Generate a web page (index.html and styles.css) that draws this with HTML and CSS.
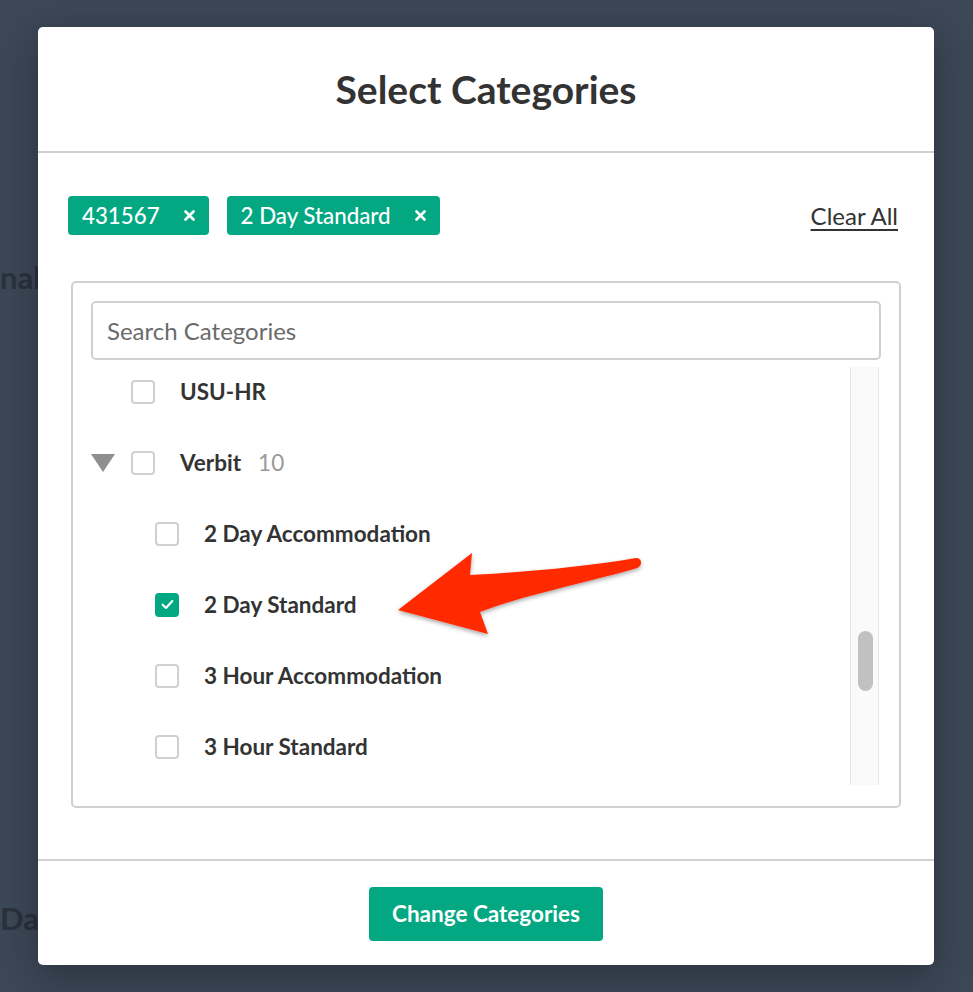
FILE: index.html
```html
<!DOCTYPE html>
<html lang="en">
<head>
  <meta charset="UTF-8">
  <title>Select Categories</title>
  <link rel="stylesheet" href="styles.css">
</head>
<body>

  <div class="page">
    <div class="page-line page-line-top">nal</div>
    <div class="page-line page-line-bottom">Date</div>
  </div>

  <div class="modal">
    <div class="modal-header">
      <h2>Select Categories</h2>
    </div>

    <div class="modal-body">
      <div class="tags-row">
        <div class="tags">
          <span class="tag">431567
            <svg class="tag-x" width="11" height="11" viewBox="0 0 11 11"><path d="M1.5 1.5 L9.5 9.5 M9.5 1.5 L1.5 9.5" stroke="#fff" stroke-width="2.6" stroke-linecap="round"/></svg>
          </span>
          <span class="tag">2 Day Standard
            <svg class="tag-x" width="11" height="11" viewBox="0 0 11 11"><path d="M1.5 1.5 L9.5 9.5 M9.5 1.5 L1.5 9.5" stroke="#fff" stroke-width="2.6" stroke-linecap="round"/></svg>
          </span>
        </div>
        <a class="clear-all" href="#">Clear All</a>
      </div>

      <div class="picker">
        <input class="search" type="text" placeholder="Search Categories">
        <div class="list-wrap">
          <div class="list">
            <div class="row">
              <span class="caret-space"></span>
              <span class="check"></span>
              <span class="label">USU-HR</span>
            </div>
            <div class="row">
              <span class="caret-space"><span class="caret"></span></span>
              <span class="check"></span>
              <span class="label">Verbit</span>
              <span class="count">10</span>
            </div>
            <div class="row child">
              <span class="check"></span>
              <span class="label">2 Day Accommodation</span>
            </div>
            <div class="row child">
              <span class="check checked">
                <svg width="15" height="15" viewBox="0 0 14 14"><path d="M2.5 7.2 L5.6 10.2 L11.5 3.8" fill="none" stroke="#fff" stroke-width="2" stroke-linecap="round" stroke-linejoin="round"/></svg>
              </span>
              <span class="label">2 Day Standard</span>
            </div>
            <div class="row child">
              <span class="check"></span>
              <span class="label">3 Hour Accommodation</span>
            </div>
            <div class="row child">
              <span class="check"></span>
              <span class="label">3 Hour Standard</span>
            </div>
          </div>
          <div class="scrollbar"><div class="thumb"></div></div>
        </div>
      </div>
    </div>

    <div class="modal-footer">
      <button type="button">Change Categories</button>
    </div>
  </div>

  <!-- annotation arrow over the screenshot -->
  <svg class="arrow" width="973" height="992" viewBox="0 0 973 992">
    <defs>
      <filter id="sh" x="-20%" y="-40%" width="140%" height="180%">
        <feDropShadow dx="0" dy="2" stdDeviation="2" flood-color="#000" flood-opacity="0.35"/>
      </filter>
    </defs>
    <path d="M398 610 L472 553 L470 575 C530 572 590 566 636 558 C642 557 643 566 637 568 C590 582 520 596 480 612 L488 634 Z" fill="#ff2a00" filter="url(#sh)"/>
  </svg>

</body>
</html>
```

FILE: styles.css
```css
html, body { margin: 0; height: 100%; }
body { background: #3c4757; font-family: Lato, "Noto Sans", sans-serif; color: #333; overflow: hidden; }

.page { position: relative; height: 992px; }
.page-line { position: absolute; left: 0; font-size: 31px; font-weight: bold; color: #29313d; }
.page-line-top { top: 258px; }
.page-line-bottom { top: 899px; }

.modal { position: absolute; left: 38px; top: 27px; width: 896px; height: 938px; background: #fff; border-radius: 5px; box-shadow: 0 12px 40px rgba(0, 0, 0, 0.3); display: flex; flex-direction: column; }

.modal-header { height: 124px; border-bottom: 2px solid #d0d0d0; display: flex; align-items: center; justify-content: center; }
.modal-header h2 { margin: 0; font-size: 39px; font-weight: bold; color: #333; }

.modal-body { flex: 1; padding: 43px 36px 0 30px; border-bottom: 2px solid #d0d0d0; }

.tags-row { display: flex; align-items: center; justify-content: space-between; }
.tags { display: flex; gap: 18px; }
.tag { display: inline-flex; align-items: center; height: 39px; padding: 0 14px; background: #03a883; color: #fff; font-size: 22.3px; font-weight: 500; border-radius: 4px; }
.tag-x { margin-left: 24px; }
.clear-all { color: #333; font-size: 24px; text-decoration: underline; text-decoration-thickness: 2px; text-underline-offset: 4px; }

.picker { margin: 46px 0 0 3px; width: 830px; height: 527px; border: 2px solid #d0d0d0; border-radius: 5px; padding: 18px 18px 0 18px; box-sizing: border-box; }
.search { display: block; width: 100%; height: 59px; box-sizing: border-box; border: 2px solid #d0d0d0; border-radius: 5px; padding: 0 14px; font-family: Lato, sans-serif; font-size: 24px; color: #333; }
.search::placeholder { color: #6b6b6b; }

.list-wrap { display: flex; height: 418px; margin-top: 7px; overflow: hidden; }
.list { flex: 1; margin-top: -11px; }
.row { display: flex; align-items: center; height: 71px; font-size: 22.5px; }
.row.child { padding-left: 64px; }
.caret-space { width: 40px; display: flex; }
.caret { width: 0; height: 0; border-left: 12px solid transparent; border-right: 12px solid transparent; border-top: 18px solid #8f8f8f; }
.check { width: 24px; height: 24px; box-sizing: border-box; border: 2px solid #d0d0d0; border-radius: 4px; margin-right: 25px; display: flex; align-items: center; justify-content: center; }
.check.checked { background: #03a883; border-color: #03a883; }
.label { font-weight: bold; color: #333; }
.count { color: #999; margin-left: 17px; }

.scrollbar { width: 27px; margin-right: 2px; background: #fafafa; border-left: 1px solid #e6e6e6; border-right: 1px solid #e6e6e6; position: relative; }
.thumb { position: absolute; left: 7px; top: 264px; width: 15px; height: 60px; background: #c1c1c1; border-radius: 8px; }

.modal-footer { height: 104px; display: flex; align-items: center; justify-content: center; }
.modal-footer button { width: 234px; height: 54px; background: #03a883; color: #fff; border: none; border-radius: 4px; font-family: Lato, sans-serif; font-size: 22.5px; font-weight: bold; cursor: pointer; margin-top: 1px; }

.arrow { position: absolute; left: 0; top: 0; pointer-events: none; }
```
